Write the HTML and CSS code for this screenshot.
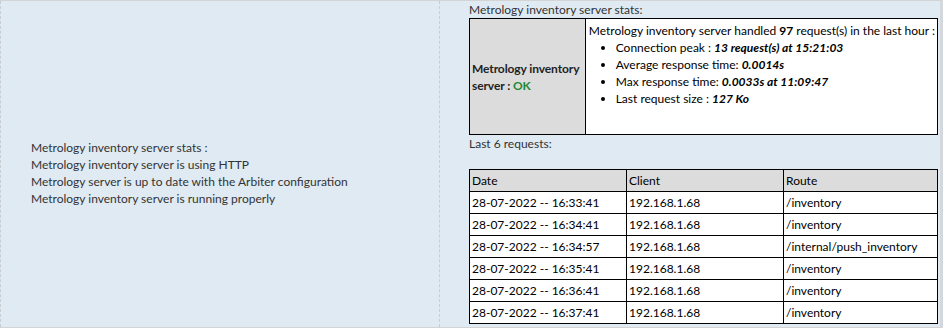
FILE: index.html
```html
<!DOCTYPE html>
<html lang="en">
<head>
    <meta charset="UTF-8">
    <title>Metrology inventory server</title>
    <link rel="stylesheet" href="styles.css">
</head>
<body>
    <div class="page">
        <!-- Summary -->
        <div class="panel summary">
            <div class="summary-text">
                <div>Metrology inventory server stats :</div>
                <div>Metrology inventory server is using HTTP</div>
                <div>Metrology server is up to date with the Arbiter configuration</div>
                <div>Metrology inventory server is running properly</div>
            </div>
        </div>

        <!-- Details -->
        <div class="panel details">
            <div class="caption">Metrology inventory server stats:</div>
            <table class="stats">
                <tr>
                    <td class="stats-name">Metrology inventory server : <span class="ok">OK</span></td>
                    <td class="stats-body">
                        <div class="stats-head">Metrology inventory server handled <b>97</b> request(s) in the last hour :</div>
                        <ul>
                            <li>Connection peak : <b><i>13 request(s) at 15:21:03</i></b></li>
                            <li>Average response time: <b><i>0.0014s</i></b></li>
                            <li>Max response time: <b><i>0.0033s at 11:09:47</i></b></li>
                            <li>Last request size : <b><i>127 Ko</i></b></li>
                        </ul>
                    </td>
                </tr>
            </table>

            <div class="caption last">Last 6 requests:</div>
            <table class="requests">
                <tr><th>Date</th><th>Client</th><th>Route</th></tr>
                <tr><td>28-07-2022 -- 16:33:41</td><td>192.168.1.68</td><td>/inventory</td></tr>
                <tr><td>28-07-2022 -- 16:34:41</td><td>192.168.1.68</td><td>/inventory</td></tr>
                <tr><td>28-07-2022 -- 16:34:57</td><td>192.168.1.68</td><td>/internal/push_inventory</td></tr>
                <tr><td>28-07-2022 -- 16:35:41</td><td>192.168.1.68</td><td>/inventory</td></tr>
                <tr><td>28-07-2022 -- 16:36:41</td><td>192.168.1.68</td><td>/inventory</td></tr>
                <tr><td>28-07-2022 -- 16:37:41</td><td>192.168.1.68</td><td>/inventory</td></tr>
            </table>
        </div>
    </div>
</body>
</html>
```

FILE: styles.css
```css
/* Общие стили */
body {
    margin: 0;
    padding: 0;
    font-family: Lato, "Open Sans", sans-serif;
    font-size: 12px;
    color: #333;
    background: #ffffff;
}
.page {
    display: flex;
    width: 943px;
    height: 328px;
    box-sizing: border-box;
    border-top: 1px solid #d4d4d4;
    border-bottom: 1px solid #d4d4d4;
    border-right: 3px solid #d4d8dc;
    background: #dfeaf3;
}
.panel {
    border-left: 1px dashed #c8cdd2;
    box-sizing: border-box;
}
.summary {
    width: 439px;
    padding: 138px 0 0 30px;
}
.summary-text div {
    line-height: 17px;
}
.details {
    flex: 1;
    padding: 1px 2px 0 29px;
}
.caption {
    line-height: 16px;
}
.caption.last {
    margin: 1px 0 17px;
}
table {
    width: 100%;
    border-collapse: collapse;
    color: #000;
}
td, th {
    border: 1px solid #000;
}
.stats {
    height: 117px;
}
.stats-name {
    width: 112px;
    background: #dcdcdc;
    padding: 0 2px;
    font-weight: bold;
    line-height: 17px;
    color: #222;
    letter-spacing: -0.1px;
}
.ok {
    color: #1e8a35;
}
.stats-body {
    vertical-align: top;
    padding: 3px 2px 0 3px;
    background: #fff;
    line-height: 17px;
}
.stats-head {
    white-space: nowrap;
}
.stats-body ul {
    margin: 0;
    padding-left: 27px;
}
.requests {
    table-layout: fixed;
}
.requests th {
    background: #dcdcdc;
    text-align: left;
    font-weight: normal;
    height: 21px;
    padding: 0 2px;
}
.requests td {
    background: #fff;
    height: 21px;
    padding: 0 2px;
    white-space: nowrap;
}
.requests th:nth-child(1), .requests th:nth-child(2) {
    width: 152px;
}
```
